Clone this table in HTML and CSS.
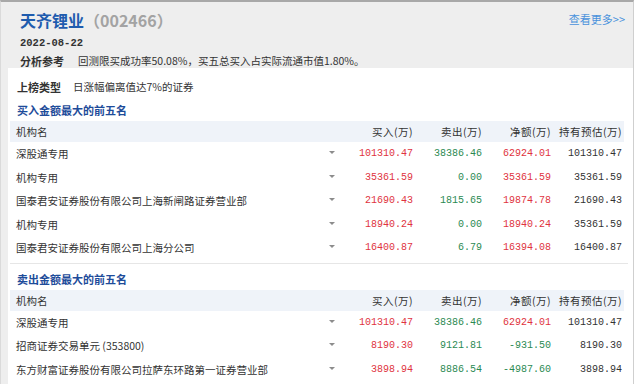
FILE: index.html
```html
<!DOCTYPE html>
<html lang="zh-CN">
<head>
<meta charset="utf-8">
<title>天齐锂业 龙虎榜</title>
<link rel="stylesheet" href="styles.css">
</head>
<body>
<div class="frame">
  <header class="top">
    <div class="title-row">
      <h1 class="title"><span class="name">天齐锂业</span><span class="code">（002466）</span></h1>
      <a class="more" href="#">查看更多&gt;&gt;</a>
    </div>
    <div class="date">2022-08-22</div>
    <div class="ref"><b class="label">分析参考</b><span>回测限买成功率50.08%，买五总买入占实际流通市值1.80%。</span></div>
  </header>
  <main class="content">
    <div class="type"><b class="label">上榜类型</b><span>日涨幅偏离值达7%的证券</span></div>

    <h2 class="sec-title">买入金额最大的前五名</h2>
    <div class="tbl">
      <div class="row head"><span class="nm">机构名</span><span></span><span class="num">买入(万)</span><span class="num">卖出(万)</span><span class="num">净额(万)</span><span class="num">持有预估(万)</span></div>
      <div class="row"><span class="nm">深股通专用</span><span class="arr"></span><span class="num red">101310.47</span><span class="num green">38386.46</span><span class="num red">62924.01</span><span class="num">101310.47</span></div>
      <div class="row"><span class="nm">机构专用</span><span class="arr"></span><span class="num red">35361.59</span><span class="num green">0.00</span><span class="num red">35361.59</span><span class="num">35361.59</span></div>
      <div class="row"><span class="nm">国泰君安证券股份有限公司上海新闸路证券营业部</span><span class="arr"></span><span class="num red">21690.43</span><span class="num green">1815.65</span><span class="num red">19874.78</span><span class="num">21690.43</span></div>
      <div class="row"><span class="nm">机构专用</span><span class="arr"></span><span class="num red">18940.24</span><span class="num green">0.00</span><span class="num red">18940.24</span><span class="num">35361.59</span></div>
      <div class="row"><span class="nm">国泰君安证券股份有限公司上海分公司</span><span class="arr"></span><span class="num red">16400.87</span><span class="num green">6.79</span><span class="num red">16394.08</span><span class="num">16400.87</span></div>
    </div>

    <hr class="sep">

    <h2 class="sec-title">卖出金额最大的前五名</h2>
    <div class="tbl">
      <div class="row head"><span class="nm">机构名</span><span></span><span class="num">买入(万)</span><span class="num">卖出(万)</span><span class="num">净额(万)</span><span class="num">持有预估(万)</span></div>
      <div class="row"><span class="nm">深股通专用</span><span class="arr"></span><span class="num red">101310.47</span><span class="num green">38386.46</span><span class="num red">62924.01</span><span class="num">101310.47</span></div>
      <div class="row"><span class="nm">招商证券交易单元 (353800)</span><span class="arr"></span><span class="num red">8190.30</span><span class="num green">9121.81</span><span class="num green">-931.50</span><span class="num">8190.30</span></div>
      <div class="row"><span class="nm">东方财富证券股份有限公司拉萨东环路第一证券营业部</span><span class="arr"></span><span class="num red">3898.94</span><span class="num green">8886.54</span><span class="num green">-4987.60</span><span class="num">3898.94</span></div>
    </div>
  </main>
</div>
</body>
</html>
```

FILE: styles.css
```css
* { box-sizing: border-box; }
html, body { margin: 0; padding: 0; background: #fff; }
body {
  font-family: "Noto Sans CJK SC", "Liberation Sans", sans-serif;
  font-size: 10.5px;
  color: #333;
  overflow: hidden;
  height: 384px;
}
.frame {
  width: 634px;
  height: 384px;
  background: #eeeeee;
  border-top: 2px solid #a8a8a8;
  border-left: 1px solid #dadada;
  border-right: 1px solid #cfcfcf;
}
.top { padding: 7px 0 0 19px; height: 66px; }
.title-row { display: flex; justify-content: space-between; align-items: flex-start; padding-right: 8px; }
.title { margin: 0; font-size: 16px; line-height: 22px; font-weight: bold; display: flex; }
.name { color: #1f5cae; }
.code { color: #a3a3a3; }
.more { color: #4a92dc; text-decoration: none; font-size: 11px; line-height: 16px; margin-top: 2px; }
.date {
  margin-top: 5px;
  font-family: "Liberation Mono", monospace;
  font-weight: bold;
  font-size: 10.5px;
  line-height: 14px;
  color: #333;
}
.ref { margin-top: 4px; line-height: 14px; display: flex; gap: 14px; }
.label { font-weight: bold; font-size: 11px; color: #333; }
.content {
  margin-left: 7px;
  background: #fff;
  height: 316px;
  padding: 12px 9px 0 2px;
}
.type { line-height: 14px; display: flex; gap: 12px; padding-left: 7px; }
.sec-title {
  margin: 9px 0 0;
  padding-left: 7px;
  font-size: 11px;
  line-height: 14px;
  font-weight: bold;
  color: #1e4c9a;
}
.tbl { margin-top: 4px; }
.row {
  display: grid;
  grid-template-columns: 314px 15px 75px 69px 69px 71px;
  height: 23.5px;
  align-items: center;
}
.row.head { height: 21px; background: #eff3f9; }
.nm { padding-left: 6px; white-space: nowrap; }
.head .num { letter-spacing: 0.5px; }
.num {
  text-align: right;
  font-family: "Liberation Mono", "Noto Sans CJK SC", monospace;
  font-size: 10px;
  padding-right: 1px;
}
.head .num { font-family: "Noto Sans CJK SC", sans-serif; font-size: 10.5px; }
.red { color: #e03340; }
.green { color: #2b8a52; }
.arr {
  justify-self: center;
  width: 0; height: 0;
  border-left: 3px solid transparent;
  border-right: 3px solid transparent;
  border-top: 3px solid #8c8c8c;
  margin-top: -2px;
}
.sep {
  margin: 3px 0 0 0;
  border: 0;
  border-top: 1px solid #e6e6e6;
  height: 0;
  width: 618px;
}
.sep + .sec-title { margin-top: 8px; }
```
